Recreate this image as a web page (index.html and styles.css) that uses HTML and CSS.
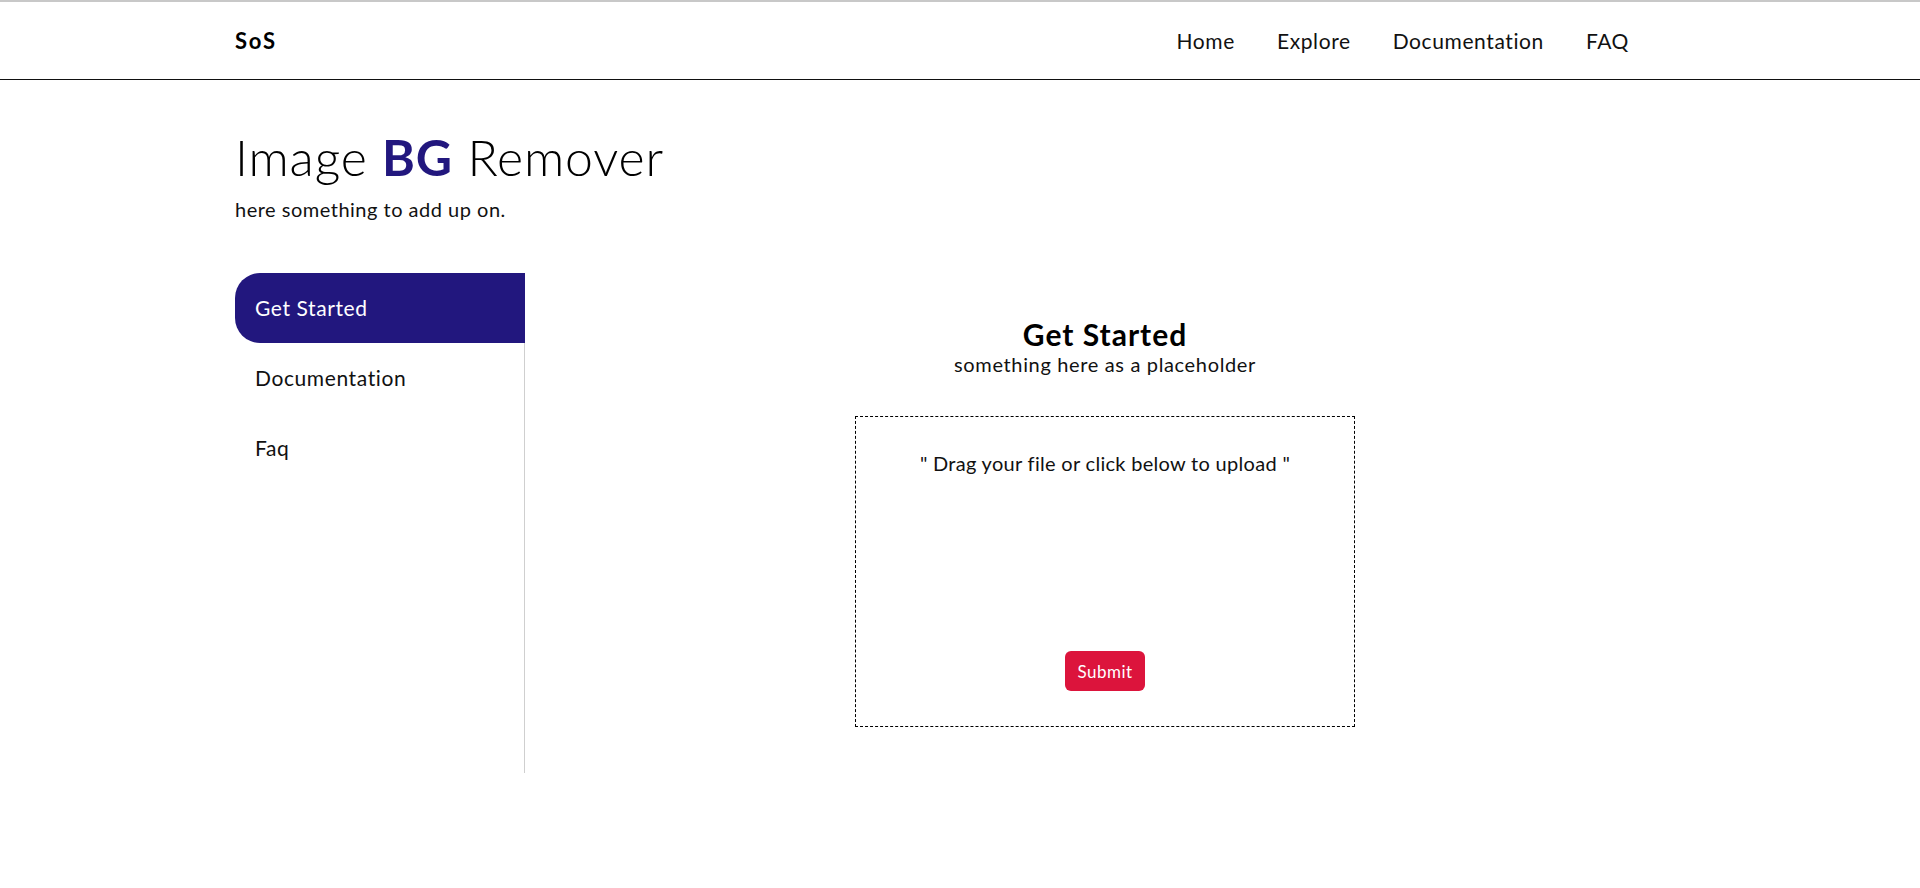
FILE: index.html
```html
<!DOCTYPE html>
<html lang="en">
<head>
<meta charset="utf-8">
<title>SoS - Image BG Remover</title>
<link rel="stylesheet" href="styles.css">
</head>
<body>
<header class="site-header">
  <div class="container header-inner">
    <a class="brand" href="#">SoS</a>
    <nav class="main-nav">
      <a href="#">Home</a>
      <a href="#">Explore</a>
      <a href="#">Documentation</a>
      <a href="#">FAQ</a>
    </nav>
  </div>
</header>
<main class="container">
  <section class="hero">
    <h1 class="hero-title">Image <strong>BG</strong> Remover</h1>
    <p class="hero-sub">here something to add up on.</p>
  </section>
  <section class="workspace">
    <aside class="sidebar">
      <a class="tab active" href="#">Get Started</a>
      <a class="tab" href="#">Documentation</a>
      <a class="tab" href="#">Faq</a>
    </aside>
    <div class="panel">
      <h2 class="panel-title">Get Started</h2>
      <p class="panel-sub">something here as a placeholder</p>
      <form class="dropzone">
        <p class="drop-text">" Drag your file or click below to upload "</p>
        <button class="submit" type="button">Submit</button>
      </form>
    </div>
  </section>
</main>
</body>
</html>
```

FILE: styles.css
```css
* { box-sizing: border-box; }

html, body {
  margin: 0;
  padding: 0;
  background: #fff;
  color: #111;
  font-family: Lato, "Open Sans", sans-serif;
}

body { border-top: 2px solid #c8c8c8; }

a { color: inherit; text-decoration: none; }

.container {
  width: 1450px;
  margin: 0 auto;
}

.site-header {
  border-bottom: 1px solid #111;
}

.header-inner {
  height: 77px;
  display: flex;
  align-items: center;
  justify-content: space-between;
}

.brand {
  font-weight: 700;
  font-size: 22px;
  letter-spacing: 1.8px;
  color: #000;
}

.main-nav {
  display: flex;
  gap: 42px;
  padding-right: 56px;
  font-size: 21px;
  letter-spacing: 0.6px;
}

.hero {
  padding-top: 47px;
}

.hero-title {
  margin: 0;
  font-size: 50px;
  font-weight: 300;
  line-height: 60px;
  letter-spacing: 0.85px;
  color: #000;
}

.hero-title strong {
  font-weight: 700;
  color: #22177e;
}

.hero-sub {
  margin: 11px 0 0;
  font-size: 20px;
  line-height: 22px;
  letter-spacing: 0.5px;
}

.workspace {
  margin-top: 53px;
  display: flex;
}

.sidebar {
  width: 290px;
  height: 500px;
  border-right: 1px solid #cfcfcf;
  display: flex;
  flex-direction: column;
}

.tab {
  height: 70px;
  display: flex;
  align-items: center;
  padding-left: 20px;
  padding-bottom: 2px;
  font-size: 21px;
  letter-spacing: 0.6px;
  color: #111;
}

.tab.active {
  background: #22177e;
  color: #fff;
  border-radius: 25px 0 0 25px;
  margin-right: -1px;
}

.panel {
  flex: 1;
  display: flex;
  flex-direction: column;
  align-items: center;
  padding-top: 44px;
}

.panel-title {
  margin: 0;
  font-size: 30px;
  font-weight: 700;
  line-height: 34px;
  letter-spacing: 1px;
  color: #000;
}

.panel-sub {
  margin: 2px 0 0;
  font-size: 20px;
  line-height: 22px;
  letter-spacing: 0.65px;
}

.dropzone {
  margin-top: 41px;
  width: 500px;
  height: 311px;
  border: 1px dashed #000;
  padding: 35px 20px 35px;
  display: flex;
  flex-direction: column;
  align-items: center;
  justify-content: space-between;
}

.drop-text {
  margin: 0;
  font-size: 20px;
  line-height: 23px;
  letter-spacing: 0.3px;
}

.submit {
  width: 80px;
  height: 40px;
  border: 0;
  border-radius: 6px;
  background: #dc143c;
  color: #fff;
  font-family: Lato, "Open Sans", sans-serif;
  font-size: 17px;
  letter-spacing: 0.5px;
  cursor: pointer;
}
```
